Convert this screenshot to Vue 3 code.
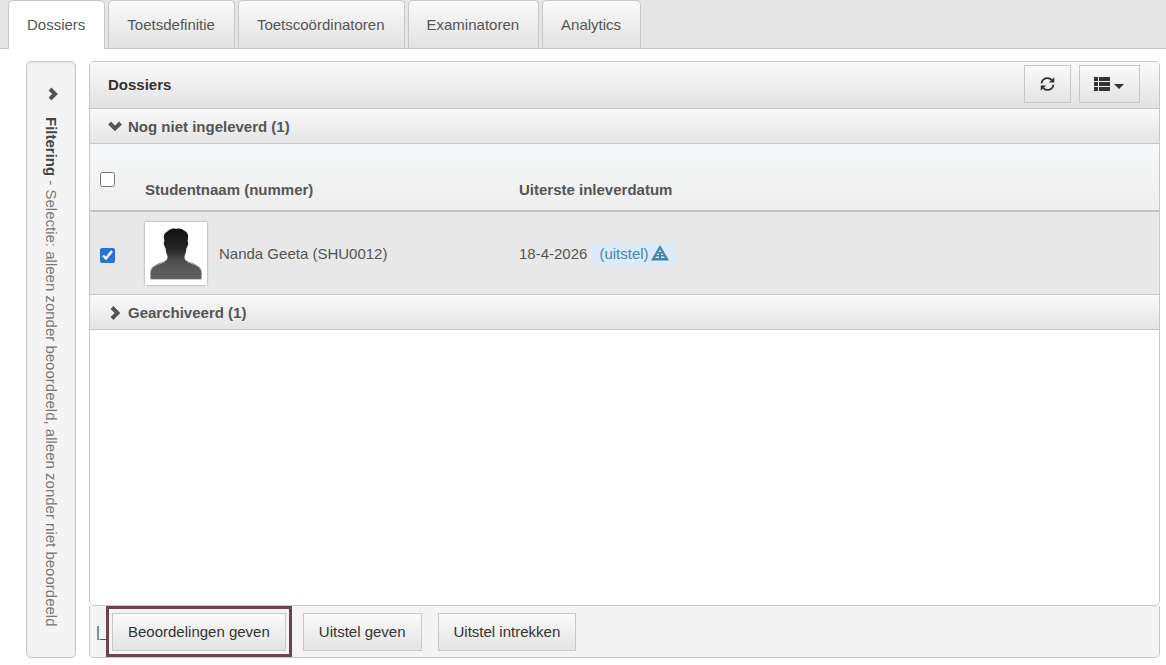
<script setup>
import { ref } from 'vue'

const tabs = ['Dossiers', 'Toetsdefinitie', 'Toetscoördinatoren', 'Examinatoren', 'Analytics']
const activeTab = ref('Dossiers')
const allSelected = ref(false)
const students = ref([
  { name: 'Nanda Geeta', number: 'SHU0012', deadline: '18-4-2026', postponed: true, selected: true },
])
</script>

<template>
  <div class="page">
    <nav class="tabs">
      <a
        v-for="tab in tabs"
        :key="tab"
        href="#"
        class="tab"
        :class="{ active: tab === activeTab }"
        @click.prevent="activeTab = tab"
      >{{ tab }}</a>
    </nav>

    <main class="content">
      <button class="filter" type="button">
        <svg class="chevron" viewBox="0 0 14 14" width="14" height="14" aria-hidden="true">
          <path d="M5 2l5 5-5 5" />
        </svg>
        <span class="filter-text"><b>Filtering</b> - Selectie: alleen zonder beoordeeld, alleen zonder niet beoordeeld</span>
      </button>

      <section class="column">
        <div class="panel">
          <header class="panel-head">
            <h1>Dossiers</h1>
            <button class="btn refresh" type="button" aria-label="Vernieuwen">
              <svg viewBox="0 0 16 16" width="16" height="16" aria-hidden="true">
                <path d="M1.7 7.4A6.2 6.2 0 0 1 12.4 3.7M14.3 8.6A6.2 6.2 0 0 1 3.6 12.3" fill="none" stroke="#333" stroke-width="1.9" />
                <path d="M15.2 .8v5.7H9.4zM.8 15.2V9.5h5.8z" fill="#333" />
              </svg>
            </button>
            <button class="btn view" type="button" aria-label="Weergave">
              <svg viewBox="0 0 16 14" width="16" height="14" aria-hidden="true">
                <path d="M0 0h4v4H0zM5 0h11v4H5zM0 5h4v4H0zM5 5h11v4H5zM0 10h4v4H0zM5 10h11v4H5z" fill="#333" />
              </svg>
              <svg class="caret" viewBox="0 0 10 5" width="10" height="5" aria-hidden="true">
                <path d="M0 0h10L5 5z" fill="#333" />
              </svg>
            </button>
          </header>

          <button class="group" type="button" aria-expanded="true">
            <svg class="chevron" viewBox="0 0 14 14" width="14" height="14" aria-hidden="true">
              <path d="M1.500 3l5.500 5.500L12.500 3" />
            </svg>
            Nog niet ingeleverd (1)
          </button>

          <table class="dossiers">
            <thead>
              <tr>
                <th class="check"><input v-model="allSelected" type="checkbox" aria-label="Alles selecteren"></th>
                <th class="student">Studentnaam (nummer)</th>
                <th>Uiterste inleverdatum</th>
              </tr>
            </thead>
            <tbody>
              <tr v-for="s in students" :key="s.number">
                <td class="check"><input v-model="s.selected" type="checkbox" :aria-label="s.name"></td>
                <td class="student">
                  <div class="person">
                    <svg class="avatar" viewBox="0 0 62 63" width="62" height="63" aria-hidden="true">
                      <defs>
                        <linearGradient id="silhouette" x1="0" y1="0" x2="0" y2="1">
                          <stop offset="0" stop-color="#111113" />
                          <stop offset=".4" stop-color="#252527" />
                          <stop offset=".65" stop-color="#505052" />
                          <stop offset="1" stop-color="#626265" />
                        </linearGradient>
                      </defs>
                      <path d="M6 57h50v1H6z" fill="#ccc" />
                      <path d="M31 7C34 6 37 7 39 8.500C43 10 44 14 42.500 19C44 20 43 24 41.500 26C41 30 40.500 32 39.500 34C39.500 37 40 38.500 43 39.500C49 42 56.500 44 56.500 50V57H5.500V50C5.500 44 13 42 19 39.500C22 38.500 22.500 37 22.500 34C21.500 32 21 30 20.500 26C19 24 18 20 19.500 19C18 14 19 11 23 9C25 7 28 6 31 7Z" fill="url(#silhouette)" />
                      <path d="M20 40C12 43 6.500 44.500 6 49M42 40C50 43 55.500 44.500 56 49" fill="none" stroke="#98989a" stroke-width="1" />
                    </svg>
                    <span>{{ s.name }} ({{ s.number }})</span>
                  </div>
                </td>
                <td>
                  <div class="deadline">
                    {{ s.deadline }}
                    <a v-if="s.postponed" class="postponed" href="#">(uitstel)<svg viewBox="0 0 18 16" width="18" height="16" aria-hidden="true">
                      <path d="M9 0l9 15.500H0z" fill="#4682ae" />
                      <path d="M9 4.500L10.500 7h-3zM6.500 8.500H8V10H5.700zM10 8.500h1.500l.8 1.500H10zM5 11.500h3V13H4.200zM10 11.500h3l.8 1.500H10z" fill="#dbebf7" />
                    </svg></a>
                  </div>
                </td>
              </tr>
            </tbody>
          </table>

          <button class="group" type="button" aria-expanded="false">
            <svg class="chevron" viewBox="0 0 14 14" width="14" height="14" aria-hidden="true">
              <path d="M4 1.500L9.500 7 4 12.500" />
            </svg>
            Gearchiveerd (1)
          </button>
        </div>

        <footer class="actions">
          <span class="mark">|_</span>
          <div class="highlight">
            <button class="btn" type="button">Beoordelingen geven</button>
          </div>
          <button class="btn" type="button">Uitstel geven</button>
          <button class="btn" type="button">Uitstel intrekken</button>
        </footer>
      </section>
    </main>
  </div>
</template>

<style>
body {
  margin: 0;
  background: #fff;
}
</style>

<style scoped>
.page {
  display: flex;
  flex-direction: column;
  min-height: 100vh;
  color: #555;
  font: 15px/20px "Liberation Sans", Arial, sans-serif;
}

.page *,
.page {
  box-sizing: border-box;
}

button {
  margin: 0;
  font: inherit;
  color: inherit;
  cursor: pointer;
}

.tabs {
  display: flex;
  gap: 3px;
  padding: 0 8px;
  background: #e5e5e5;
  border-bottom: 1px solid #c8c8c8;
}

.tab {
  height: 48px;
  padding: 14px 19px 14px 18px;
  color: #555;
  text-decoration: none;
  background: linear-gradient(#fafafa, #e2e2e2);
  border: 1px solid #c8c8c8;
  border-bottom: 0;
  border-radius: 5px 5px 0 0;
}

.tab.active {
  height: 49px;
  margin-bottom: -1px;
  background: #fff;
}

.content {
  display: flex;
  flex: 1;
  gap: 13px;
  padding: 12px 6px 7px 26px;
}

.chevron {
  flex: none;
}

.chevron path {
  fill: none;
  stroke: #555;
  stroke-width: 4;
}

.filter {
  display: flex;
  flex: none;
  flex-direction: column;
  align-items: center;
  gap: 16px;
  width: 50px;
  padding: 25px 1px 0 0;
  color: #777;
  background: #f4f4f4;
  border: 1px solid #c8c8c8;
  border-radius: 5px;
  box-shadow: inset 0 1px 3px rgba(0, 0, 0, .08);
}

.filter .chevron {
  margin-left: 3px;
}

.filter-text {
  writing-mode: vertical-rl;
  white-space: nowrap;
}

.filter-text b {
  color: #444;
}

.column {
  display: flex;
  flex: 1;
  flex-direction: column;
  min-width: 0;
}

.panel {
  flex: 1;
  overflow: hidden;
  border: 1px solid #c8c8c8;
  border-radius: 5px;
}

.panel-head {
  display: flex;
  align-items: center;
  gap: 8px;
  height: 47px;
  padding: 0 19px 2px 18px;
  background: linear-gradient(#fafafa, #e2e2e2);
  border-bottom: 1px solid #c8c8c8;
}

h1 {
  flex: 1;
  margin: 0;
  padding-top: 2px;
  color: #333;
  font-size: 15px;
}

.btn {
  height: 38px;
  padding: 0 15px;
  color: #333;
  background: linear-gradient(#fafafa, #e4e4e4);
  border: 1px solid #c8c8c8;
}

.refresh,
.view {
  display: flex;
  align-items: center;
}

.refresh {
  width: 47px;
}

.view {
  gap: 4px;
  width: 61px;
  padding: 0 14px;
}

.caret {
  margin-top: 4px;
}

.group {
  display: flex;
  align-items: center;
  gap: 6px;
  width: 100%;
  height: 35px;
  padding: 1px 18px 0;
  font-weight: bold;
  background: linear-gradient(#fafafa, #e4e4e4);
  border: 0;
  border-bottom: 1px solid #c8c8c8;
}

.dossiers {
  width: 100%;
  table-layout: fixed;
  border-collapse: separate;
  border-spacing: 0;
}

th,
td {
  padding: 0;
  text-align: left;
}

th {
  height: 68px;
  padding-top: 26px;
  border-bottom: 2px solid #c3c3c3;
}

thead {
  background: linear-gradient(#f6f8f9, #eee);
}

td {
  height: 83px;
  background: #e8e8e8;
  border-bottom: 1px solid #c8c8c8;
}

.check {
  width: 55px;
  padding-left: 10px;
}

th.check,
td.check {
  padding-top: 4px;
}

.student {
  width: 374px;
}

input {
  display: block;
  width: 15px;
  height: 15px;
  margin: 0;
  accent-color: #2b72d3;
}

.person {
  display: flex;
  align-items: center;
  gap: 12px;
}

.person span,
.deadline {
  padding-top: 2px;
}

.avatar {
  flex: none;
  background: #fff;
  box-shadow: 0 0 2px rgba(0, 0, 0, .4);
}

.deadline {
  display: flex;
  align-items: center;
  gap: 4px;
}

.postponed {
  display: flex;
  align-items: center;
  gap: 2px;
  height: 22px;
  padding: 0 6px 0 8px;
  color: #4682ae;
  text-decoration: none;
  background: #dbebf7;
  border-radius: 2px;
}

.postponed svg {
  margin-bottom: 2px;
}

.actions {
  display: flex;
  align-items: center;
  height: 52px;
  padding-left: 6px;
  background: #f4f4f4;
  border: 1px solid #c8c8c8;
  border-top: 0;
  border-radius: 0 0 5px 5px;
}

.mark {
  width: 10px;
}

.highlight {
  display: flex;
  margin-right: 11px;
  padding: 4px 3px 3px;
  background: #f4f4f4;
  border: 3px solid #6b4450;
}

.actions > .btn {
  margin-right: 16px;
}
</style>
